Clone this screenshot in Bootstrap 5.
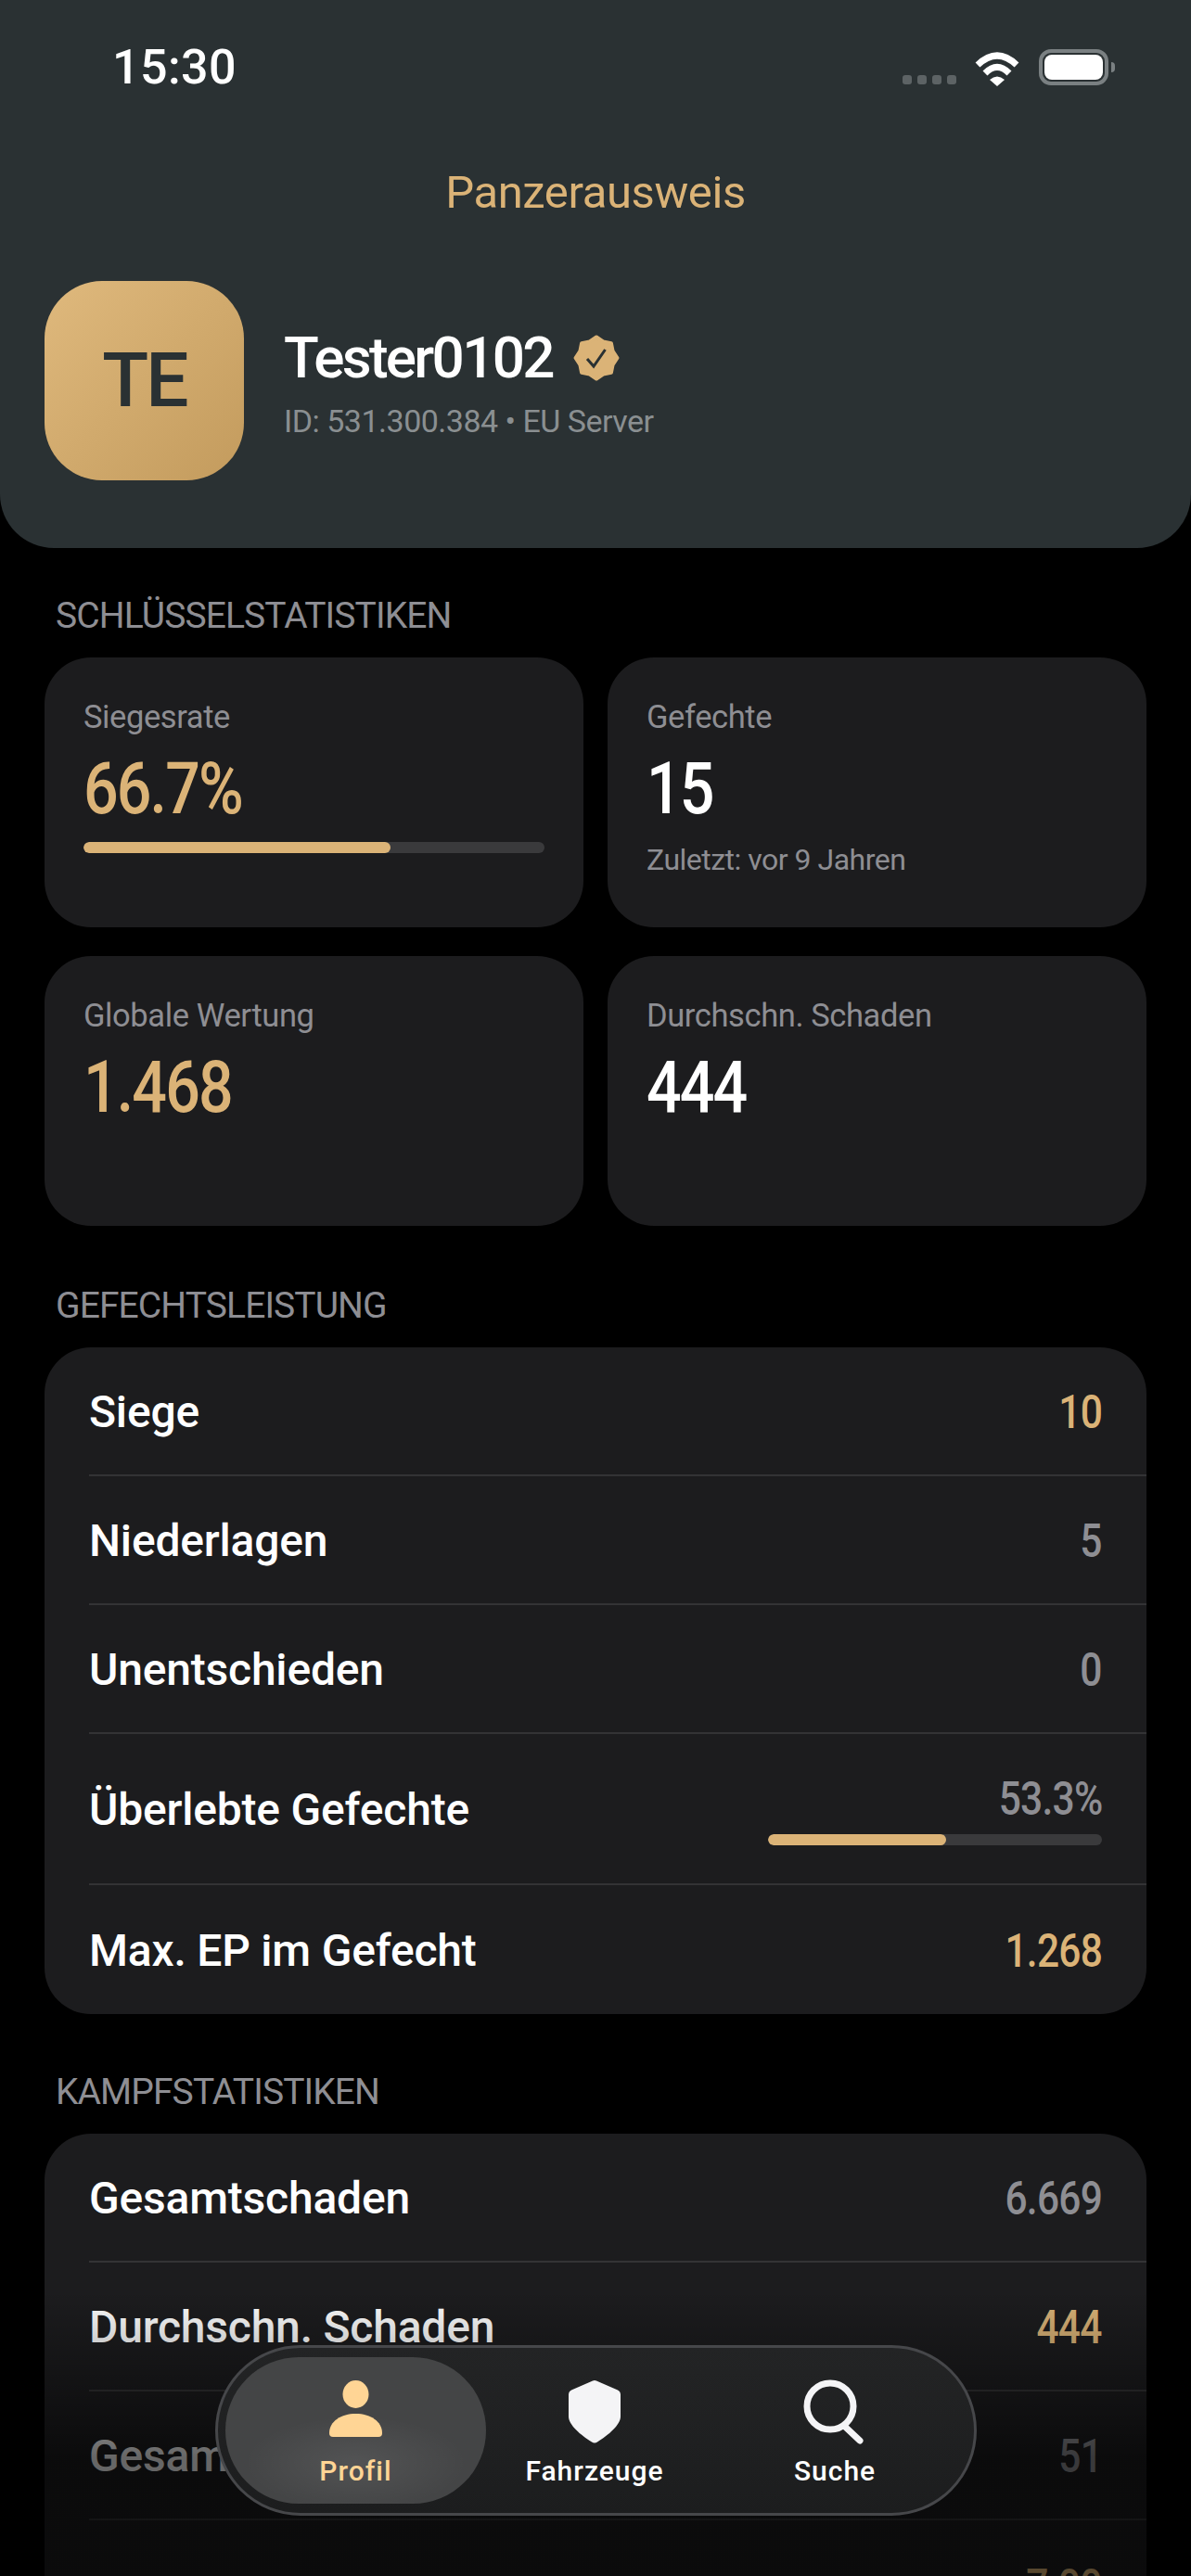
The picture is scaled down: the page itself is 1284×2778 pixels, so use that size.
<!DOCTYPE html>
<html lang="de">
<head>
  <meta charset="UTF-8" />
  <meta name="viewport" content="width=device-width, initial-scale=1" />
  <title>Panzerausweis</title>
  <link href="https://cdn.jsdelivr.net/npm/bootstrap@5.3.0/dist/css/bootstrap.min.css" rel="stylesheet" />
  <style>
    html, body { background: #000; }
    body {
      font-family: Roboto, "Liberation Sans", sans-serif;
      color: #fff;
      margin: 0;
    }
    .screen {
      position: relative;
      width: 1284px;
      height: 2778px;
      overflow: hidden;
      background: #000;
    }
    .top-panel {
      height: 591px;
      background: #2a3133;
      border-radius: 0 0 58px 58px;
      padding: 48px 48px 0;
    }
    .status-row { height: 50px; padding: 0 0 0 73px; }
    .clock { font-size: 52px; line-height: 50px; font-weight: 500; letter-spacing: .4px; }
    .signal-dots { gap: 6px; margin-right: 19px; margin-top: 28px; }
    .signal-dots i { display: block; width: 10px; height: 10px; border-radius: 3px; background: #5d6365; }
    .battery-box {
      width: 75px; height: 39px; border: 4px solid #7a8082; border-radius: 13px;
      padding: 2px; margin-left: 20px; position: relative;
    }
    .battery-box i { display: block; height: 100%; background: #fff; border-radius: 8px; }
    .battery-box::after {
      content: ""; position: absolute; right: -11px; top: 10px; width: 4px; height: 11px;
      background: #7a8082; border-radius: 0 4px 4px 0;
    }
    .status-icons { margin-right: 41px; margin-top: 5px; }
    .panel-title {
      color: #dbb377; font-size: 49px; line-height: 56px; font-weight: 400;
      text-align: center; margin: 82px 0 67px; letter-spacing: -.4px;
    }
    .avatar-box {
      width: 215px; height: 215px; border-radius: 62px; flex: none;
      background: linear-gradient(135deg, #dfb97d, #c39b5d);
      color: #2a3133; font-size: 82px; font-weight: 500; letter-spacing: -3px;
    }
    .player-info { margin-left: 43px; padding-top: 47px; }
    .player-name { font-size: 62px; line-height: 72px; font-weight: 500; letter-spacing: -2.7px; }
    .name-row { gap: 22px; }
    .player-sub { font-size: 34px; line-height: 44px; color: #8a8f91; letter-spacing: -.5px; margin-top: 10px; }
    .content-area { padding: 47px 48px 0; }
    .group-title {
      font-size: 39px; line-height: 46px; color: #8e8e93; margin: 3px 0 22px 12px;
      font-weight: 400; letter-spacing: -.9px;
    }
    .stat-grid { --bs-gutter-x: 26px; --bs-gutter-y: 31px; margin-bottom: 63px; }
    .stat-box {
      height: 291px; background: #1c1c1e; border: 0; border-radius: 50px;
      padding: 42px 42px 0; color: #fff;
    }
    .stat-label { font-size: 34.5px; line-height: 44px; color: #8e8e93; letter-spacing: -.4px; }
    .stat-value {
      font-size: 78px; line-height: 88px; font-weight: 500; letter-spacing: -2.2px; margin-top: 12px;
      transform: scaleX(.85); transform-origin: left center;
    }
    .gold { color: #dbb377; }
    .grey { color: #8e8e93; }
    .stat-note { font-size: 32px; line-height: 40px; color: #8e8e93; letter-spacing: -.5px; margin-top: 12px; }
    .bar-track { height: 12px; background: #3a3a3c; border-radius: 6px; overflow: hidden; }
    .bar-track .progress-bar { background: #dbb377; border-radius: 6px; }
    .stat-box .bar-track { margin-top: 13px; }
    .stat-list {
      --bs-list-group-bg: transparent;
      --bs-list-group-color: #fff;
      background: #1c1c1e;
      border-radius: 50px;
      margin-bottom: 61px;
    }
    .stat-list .list-group-item {
      height: 139px; margin-left: 48px; padding: 3px 48px 0 0;
      border-bottom: 2px solid #333335;
      font-size: 48px; font-weight: 500; letter-spacing: -.2px;
    }
    .stat-list .list-group-item:last-child { border-bottom: 0; }
    .stat-list .tall-row { height: 163px; }
    .row-value {
      font-size: 50px; font-weight: 500; letter-spacing: -.9px;
      transform: scaleX(.85); transform-origin: right center;
    }
    .row-bar { width: 360px; margin-top: 12px; }
    .tall-row .row-value { line-height: 52px; }
    .bottom-fade {
      position: absolute; left: 0; right: 0; top: 2470px; bottom: 0;
      background: linear-gradient(to bottom, rgba(0,0,0,0) 0, rgba(0,0,0,.6) 180px, rgba(0,0,0,.6) 100%);
      pointer-events: none;
    }
    .float-nav {
      position: absolute; left: 232px; top: 2529px; width: 821px; height: 184px;
      padding: 10px 8px;
      border-radius: 92px;
      background: linear-gradient(#232425, #1c1d1e);
      border: 3px solid #46474a;
      flex-wrap: nowrap;
    }
    .float-nav .nav-link {
      color: #fff; padding: 24px 0 0; text-align: center;
      font-size: 30px; line-height: 36px; font-weight: 500; letter-spacing: 1px;
    }
    .float-nav .nav-link svg { display: block; margin: 0 auto 11px; height: 70px; }
    .float-nav .tab-profil { width: 281px; }
    .float-nav .tab-fahrzeuge { width: 234px; }
    .float-nav .tab-suche { width: 284px; }
    .float-nav .nav-link.active {
      color: #ffd595; border-radius: 80px;
      background:
        radial-gradient(ellipse 120px 50px at 50% 72%, rgba(255,255,255,.08), transparent),
        #444546;
    }
  </style>
</head>
<body>
<div class="screen">

  <div class="top-panel">
    <div class="status-row d-flex justify-content-between">
      <span class="clock">15:30</span>
      <div class="status-icons d-flex align-items-start">
        <div class="signal-dots d-flex"><i></i><i></i><i></i><i></i></div>
        <svg width="50" height="40" viewBox="0 0 50 40">
          <path d="M4 17 Q25 -3 46 17" fill="none" stroke="#fff" stroke-width="7" />
          <path d="M12 26 Q25 13 38 26" fill="none" stroke="#fff" stroke-width="7" />
          <path d="M17 33 Q25 26 33 33 L25 40 Z" fill="#fff" />
        </svg>
        <div class="battery-box"><i></i></div>
      </div>
    </div>

    <h1 class="panel-title">Panzerausweis</h1>

    <div class="d-flex">
      <div class="avatar-box d-flex align-items-center justify-content-center">TE</div>
      <div class="player-info">
        <div class="d-flex align-items-center name-row">
          <span class="player-name">Tester0102</span>
          <svg width="50" height="50" viewBox="0 0 50 50">
            <polygon points="25,2.5 32.3,7.4 40.9,9.1 42.6,17.7 47.5,25 42.6,32.3 40.9,40.9 32.3,42.6 25,47.5 17.7,42.6 9.1,40.9 7.4,32.3 2.5,25 7.4,17.7 9.1,9.1 17.7,7.4" fill="#dbb377" stroke="#dbb377" stroke-width="4" stroke-linejoin="round" />
            <path d="M15 26 L22 34 L34.5 16" fill="none" stroke="#2a3133" stroke-width="3" />
          </svg>
        </div>
        <div class="player-sub">ID: 531.300.384 • EU Server</div>
      </div>
    </div>
  </div>

  <div class="content-area">
    <h2 class="group-title">SCHLÜSSELSTATISTIKEN</h2>
    <div class="row row-cols-2 stat-grid">
      <div class="col">
        <div class="card stat-box">
          <div class="stat-label">Siegesrate</div>
          <div class="stat-value gold">66.7%</div>
          <div class="progress bar-track"><div class="progress-bar" style="width: 66.7%"></div></div>
        </div>
      </div>
      <div class="col">
        <div class="card stat-box">
          <div class="stat-label">Gefechte</div>
          <div class="stat-value">15</div>
          <div class="stat-note">Zuletzt: vor 9 Jahren</div>
        </div>
      </div>
      <div class="col">
        <div class="card stat-box">
          <div class="stat-label">Globale Wertung</div>
          <div class="stat-value gold">1.468</div>
        </div>
      </div>
      <div class="col">
        <div class="card stat-box">
          <div class="stat-label">Durchschn. Schaden</div>
          <div class="stat-value">444</div>
        </div>
      </div>
    </div>

    <h2 class="group-title">GEFECHTSLEISTUNG</h2>
    <ul class="list-group list-group-flush stat-list">
      <li class="list-group-item d-flex justify-content-between align-items-center"><span>Siege</span><span class="row-value gold">10</span></li>
      <li class="list-group-item d-flex justify-content-between align-items-center"><span>Niederlagen</span><span class="row-value grey">5</span></li>
      <li class="list-group-item d-flex justify-content-between align-items-center"><span>Unentschieden</span><span class="row-value grey">0</span></li>
      <li class="list-group-item tall-row d-flex justify-content-between align-items-center">
        <span>Überlebte Gefechte</span>
        <div class="d-flex flex-column align-items-end">
          <span class="row-value grey">53.3%</span>
          <div class="progress bar-track row-bar"><div class="progress-bar" style="width: 53.3%"></div></div>
        </div>
      </li>
      <li class="list-group-item d-flex justify-content-between align-items-center"><span>Max. EP im Gefecht</span><span class="row-value gold">1.268</span></li>
    </ul>

    <h2 class="group-title">KAMPFSTATISTIKEN</h2>
    <ul class="list-group list-group-flush stat-list">
      <li class="list-group-item d-flex justify-content-between align-items-center"><span>Gesamtschaden</span><span class="row-value grey">6.669</span></li>
      <li class="list-group-item d-flex justify-content-between align-items-center"><span>Durchschn. Schaden</span><span class="row-value gold">444</span></li>
      <li class="list-group-item d-flex justify-content-between align-items-center"><span>Gesamtabschüsse</span><span class="row-value grey">51</span></li>
      <li class="list-group-item d-flex justify-content-end align-items-center"><span class="row-value gold">7.00</span></li>
    </ul>
  </div>

  <div class="bottom-fade"></div>

  <nav class="nav float-nav">
    <a class="nav-link tab-profil active" href="#">
      <svg width="57" height="70" viewBox="0 0 57 70">
        <ellipse cx="28.5" cy="16" rx="14" ry="15" fill="#ffd595" />
        <path d="M4 62 H53 Q57 62 57 58 C57 45 44 37 28.5 37 C13 37 0 45 0 58 Q0 62 4 62 Z" fill="#ffd595" />
      </svg>
      Profil
    </a>
    <a class="nav-link tab-fahrzeuge" href="#">
      <svg width="56" height="70" viewBox="0 0 56 70">
        <path d="M26 1.5 Q28 .5 30 1.5 L53 11.5 Q56 13 56 16.5 V40 C56 49 43 60 31 67.5 Q28 69.5 25 67.5 C13 60 0 49 0 40 V16.5 Q0 13 3 11.5 Z" fill="#f4f4f6" />
      </svg>
      Fahrzeuge
    </a>
    <a class="nav-link tab-suche" href="#">
      <svg width="68" height="70" viewBox="0 0 68 70">
        <circle cx="29" cy="29" r="25" fill="none" stroke="#f4f4f6" stroke-width="7" />
        <path d="M44 50 L61 66" fill="none" stroke="#f4f4f6" stroke-width="7" stroke-linecap="round" />
      </svg>
      Suche
    </a>
  </nav>

</div>
<script src="https://cdn.jsdelivr.net/npm/bootstrap@5.3.0/dist/js/bootstrap.bundle.min.js"></script>
</body>
</html>
